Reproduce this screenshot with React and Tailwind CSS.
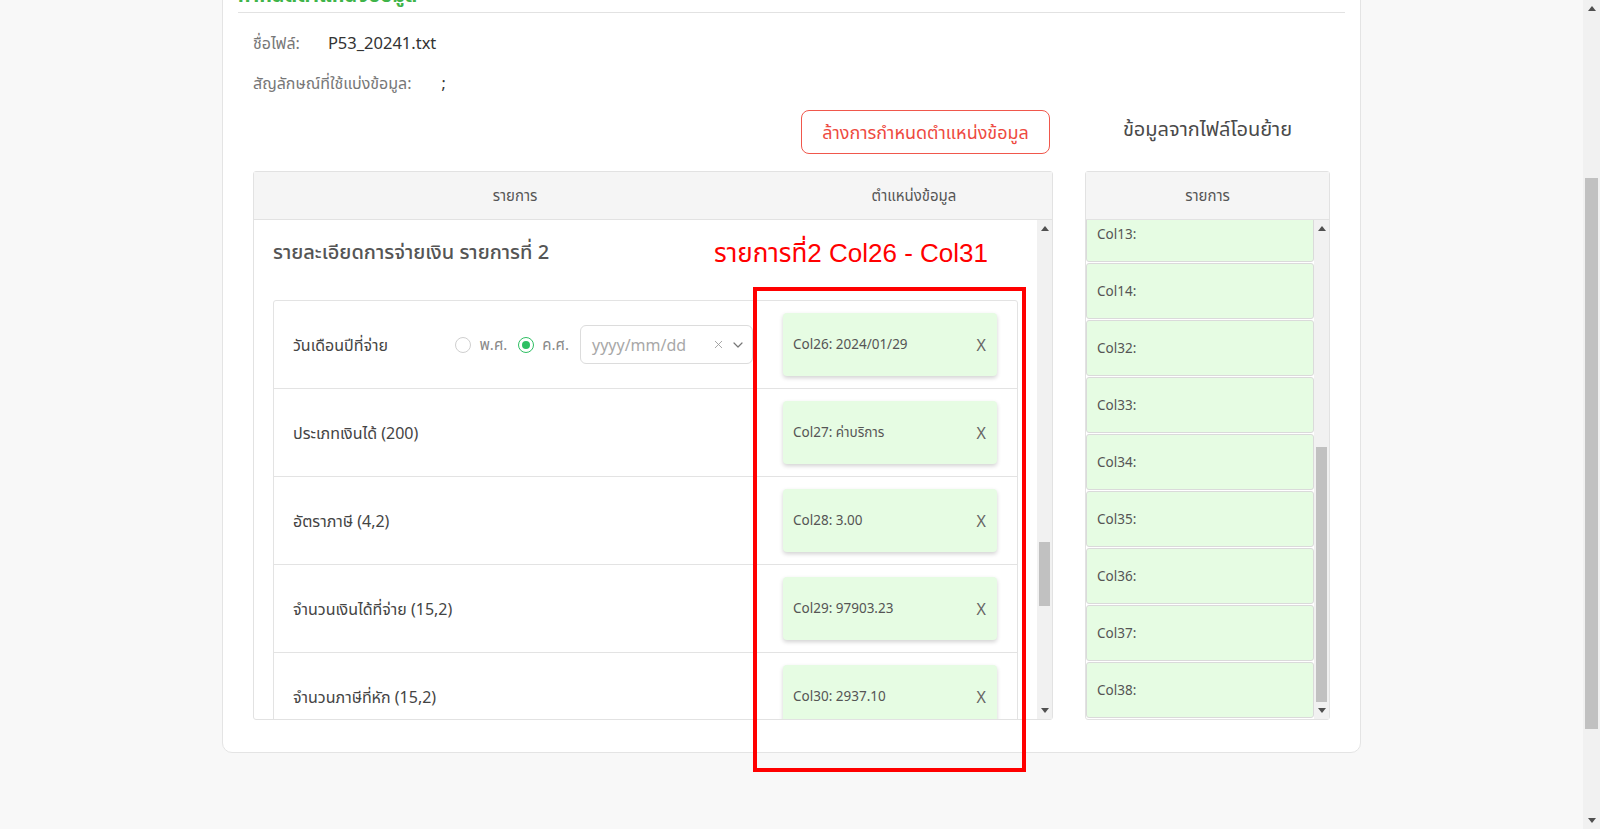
import React, { useLayoutEffect, useRef } from "react";
import { X, ChevronDown } from "lucide-react";

const generalRows = [
  ["ลำดับที่ (5)", "Col1: 1"],
  ["เลขประจำตัวผู้เสียภาษีอากร (13)", "Col2: 0105556012345"],
  ["สาขา (5)", "Col3: 00000"],
  ["คำนำหน้าชื่อ (40)", "Col4: บริษัท"],
  ["ชื่อ (80)", "Col5: ตัวอย่าง จำกัด"],
  ["ชื่อกลาง (80)", "Col6: -"],
  ["ชื่อสกุล (80)", "Col7: -"],
  ["ชื่ออาคาร (100)", "Col8: อาคารเอ"],
  ["ห้องเลขที่ (10)", "Col9: 101"],
  ["ชั้นที่ (3)", "Col10: 5"],
  ["หมู่บ้าน (100)", "Col11: -"],
  ["เลขที่ (20)", "Col12: 99/9"],
  ["หมู่ที่ (2)", null],
  ["ตรอก/ซอย (30)", null],
  ["ถนน (30)", "Col15: สุขุมวิท"],
  ["ตำบล/แขวง (30)", "Col16: คลองตัน"],
  ["อำเภอ/เขต (30)", "Col17: วัฒนา"],
  ["จังหวัด (40)", "Col18: กรุงเทพมหานคร"],
  ["รหัสไปรษณีย์ (5)", "Col19: 10110"],
];

const payRows = (vals) => [
  ["วันเดือนปีที่จ่าย", vals[0], true],
  ["ประเภทเงินได้ (200)", vals[1]],
  ["อัตราภาษี (4,2)", vals[2]],
  ["จำนวนเงินได้ที่จ่าย (15,2)", vals[3]],
  ["จำนวนภาษีที่หัก (15,2)", vals[4]],
  ["เงื่อนไขการหักภาษี (1)", vals[5]],
];

const sections = [
  { title: "ข้อมูลผู้มีเงินได้", rows: generalRows },
  {
    title: "รายละเอียดการจ่ายเงิน รายการที่ 1",
    rows: payRows([
      "Col20: 2024/01/15",
      "Col21: ค่าขนส่ง",
      "Col22: 1.00",
      "Col23: 15000.00",
      "Col24: 150.00",
      "Col25: 1",
    ]),
  },
  {
    title: "รายละเอียดการจ่ายเงิน รายการที่ 2",
    rows: payRows([
      "Col26: 2024/01/29",
      "Col27: ค่าบริการ",
      "Col28: 3.00",
      "Col29: 97903.23",
      "Col30: 2937.10",
      "Col31: 1",
    ]),
    mark: true,
  },
  {
    title: "รายละเอียดการจ่ายเงิน รายการที่ 3",
    rows: payRows([null, null, null, null, null, null]),
  },
];

const sourceCols = [
  "Col1:", "Col2:", "Col5:", "Col6:", "Col7:", "Col8:", "Col9:", "Col12:",
  "Col13:", "Col14:", "Col32:", "Col33:", "Col34:", "Col35:", "Col36:", "Col37:", "Col38:",
];

const ArrowUp = () => (
  <svg width="8" height="5" viewBox="0 0 8 5" className="fill-[#505050]">
    <path d="M4 0 L8 5 L0 5 Z" />
  </svg>
);

const ArrowDown = () => (
  <svg width="8" height="5" viewBox="0 0 8 5" className="fill-[#505050]">
    <path d="M0 0 L8 0 L4 5 Z" />
  </svg>
);

// drawn scrollbars: the shot is taken with native scrollbars hidden
const Scrollbar = ({ width, before, thumb }) => (
  <div className={`${width} shrink-0 bg-[#f1f1f1] flex flex-col`}>
    <div className="h-[17px] flex items-center justify-center">
      <ArrowUp />
    </div>
    <div className={before} />
    <div className={`${thumb} mx-[2px] bg-[#c1c1c1]`} />
    <div className="flex-1" />
    <div className="h-[17px] flex items-center justify-center">
      <ArrowDown />
    </div>
  </div>
);

const Radio = ({ checked, label }) => (
  <label className="flex items-center gap-[8px] text-[15px] text-[#888]">
    <span
      className={
        checked
          ? "w-[16px] h-[16px] rounded-full border border-[#2fbf63] bg-white flex items-center justify-center"
          : "w-[16px] h-[16px] rounded-full border border-[#cfcfcf] bg-white"
      }
    >
      {checked && <span className="w-[8px] h-[8px] rounded-full bg-[#2fbf63]" />}
    </span>
    {label}
  </label>
);

const Chip = ({ text }) =>
  text ? (
    <div className="w-[214px] h-[63px] shrink-0 rounded-[4px] bg-[#e6fce3] shadow-[0_2px_4px_rgba(0,0,0,0.18)] flex items-center justify-between pl-[10px] pr-[11px] text-[13.5px] text-[#555]">
      <span>{text}</span>
      <span className="text-[16px] text-[#666]">X</span>
    </div>
  ) : (
    <div className="w-[214px] h-[63px] shrink-0 rounded-[4px] border border-dashed border-[#cfcfcf] bg-[#fafafa] flex items-center justify-center text-[13px] text-[#aaa]">
      ลากข้อมูลมาวางที่นี่
    </div>
  );

const FieldRow = ({ label, chip, date }) => (
  <div className="h-[88px] flex items-center pl-[19px] pr-[20px] border-b border-[#e3e3e3] last:border-b-0">
    <span className="text-[16px] text-[#444]">{label}</span>
    {date && (
      <div className="ml-auto mr-[30px] flex items-center">
        <div className="flex items-center gap-[11px] mr-[11px]">
          <Radio label="พ.ศ." />
          <Radio checked label="ค.ศ." />
        </div>
        <div className="w-[173px] h-[39px] rounded-[6px] border border-[#dcdcdc] flex items-center pl-[11px] pr-[6px]">
          <span className="text-[16px] text-[#a8a8a8] flex-1">yyyy/mm/dd</span>
          <X size={13} className="text-[#999] mr-[5px]" strokeWidth={1.6} />
          <ChevronDown size={16} className="text-[#777]" strokeWidth={1.8} />
        </div>
      </div>
    )}
    <div className={date ? "" : "ml-auto"}>
      <Chip text={chip} />
    </div>
  </div>
);

export default function App() {
  const listRef = useRef(null);
  const markRef = useRef(null);
  const sourceRef = useRef(null);

  useLayoutEffect(() => {
    if (listRef.current && markRef.current) {
      listRef.current.scrollTop = markRef.current.offsetTop;
    }
    if (sourceRef.current) {
      sourceRef.current.scrollTop = sourceRef.current.scrollHeight;
    }
  }, []);

  return (
    <div
      className="h-[829px] flex bg-[#f8f8f8] overflow-hidden"
      style={{ fontFamily: '"Noto Sans", "Noto Sans Thai", "Open Sans", sans-serif' }}
    >
      <div className="flex-1 overflow-hidden">
        <div className="w-[1139px] mx-auto mt-[-40px] bg-white border border-[#e4e4e4] rounded-[10px] px-[15px] pt-[20px] pb-[32px]">
          <div className="text-[20px] leading-[28px] font-bold text-[#3fb449] pb-[3px] border-b border-[#e2e2e2]">
            กำหนดตำแหน่งข้อมูล
          </div>

          <div className="px-[15px]">
            <div className="mt-[18px] flex items-center gap-[28px] text-[16px] leading-[24px]">
              <span className="text-[#777]">ชื่อไฟล์:</span>
              <span className="text-[#333] text-[16.5px]">P53_20241.txt</span>
            </div>
            <div className="mt-[16px] flex items-center gap-[30px] text-[16px] leading-[24px]">
              <span className="text-[#777]">สัญลักษณ์ที่ใช้แบ่งข้อมูล:</span>
              <span className="text-[#333]">;</span>
            </div>

            <div className="grid grid-cols-[800px_1fr] gap-x-[32px] mt-[15px]">
              <div className="flex justify-end pr-[3px]">
                <button className="h-[44px] w-[249px] rounded-[8px] border border-[#f0574c] text-[#ee4a3f] text-[18px] bg-white">
                  ล้างการกำหนดตำแหน่งข้อมูล
                </button>
              </div>
              <div className="flex items-center justify-center pb-[6px] text-[20px] text-[#4a4a4a]">
                ข้อมูลจากไฟล์โอนย้าย
              </div>

              <div className="relative mt-[17px] border border-[#e2e2e2] rounded-[3px]">
                <div className="grid grid-cols-[522px_1fr] h-[48px] bg-[#f5f5f5] border-b border-[#e2e2e2] text-[15px] text-[#555]">
                  <div className="flex items-center justify-center">รายการ</div>
                  <div className="flex items-center justify-center">ตำแหน่งข้อมูล</div>
                </div>
                <div className="flex h-[499px]">
                  <div ref={listRef} className="relative flex-1 overflow-hidden">
                    {sections.map((s) => (
                      <div key={s.title} className="px-[19px] pb-[24px]">
                        <div
                          ref={s.mark ? markRef : null}
                          className="pt-[16px] h-[80px] text-[20px] leading-[32px] text-[#555] font-medium"
                        >
                          {s.title}
                        </div>
                        <div className="border border-[#e3e3e3] rounded-[3px]">
                          {s.rows.map(([label, chip, date]) => (
                            <FieldRow key={label} label={label} chip={chip} date={date} />
                          ))}
                        </div>
                      </div>
                    ))}
                  </div>
                  <Scrollbar width="w-[15px]" before="h-[305px]" thumb="h-[64px]" />
                </div>

                <div
                  className="absolute left-[460px] top-[62px] text-[26px] text-[#ff0000] whitespace-nowrap"
                  style={{ fontFamily: '"Liberation Sans", "Noto Sans Thai", sans-serif' }}
                >
                  รายการที่2 Col26 - Col31
                </div>
                <div className="absolute left-[499px] top-[115px] w-[273px] h-[485px] border-[4px] border-[#ff0000] pointer-events-none" />
              </div>

              <div className="mt-[17px] border border-[#e2e2e2] rounded-[3px] bg-white">
                <div className="h-[48px] bg-[#f5f5f5] border-b border-[#e2e2e2] flex items-center justify-center text-[15px] text-[#555]">
                  รายการ
                </div>
                <div className="flex h-[499px]">
                  <div ref={sourceRef} className="flex-1 overflow-hidden">
                    {sourceCols.map((c) => (
                      <div
                        key={c}
                        className="h-[56px] mb-px flex items-center pl-[10px] bg-[#e6fce3] border border-[#dadada] rounded-[3px] text-[13.5px] text-[#555]"
                      >
                        {c}
                      </div>
                    ))}
                  </div>
                  <Scrollbar width="w-[15px]" before="h-[210px]" thumb="h-[255px]" />
                </div>
              </div>
            </div>
          </div>
        </div>
      </div>
      <Scrollbar width="w-[17px]" before="h-[161px]" thumb="h-[551px]" />
    </div>
  );
}
